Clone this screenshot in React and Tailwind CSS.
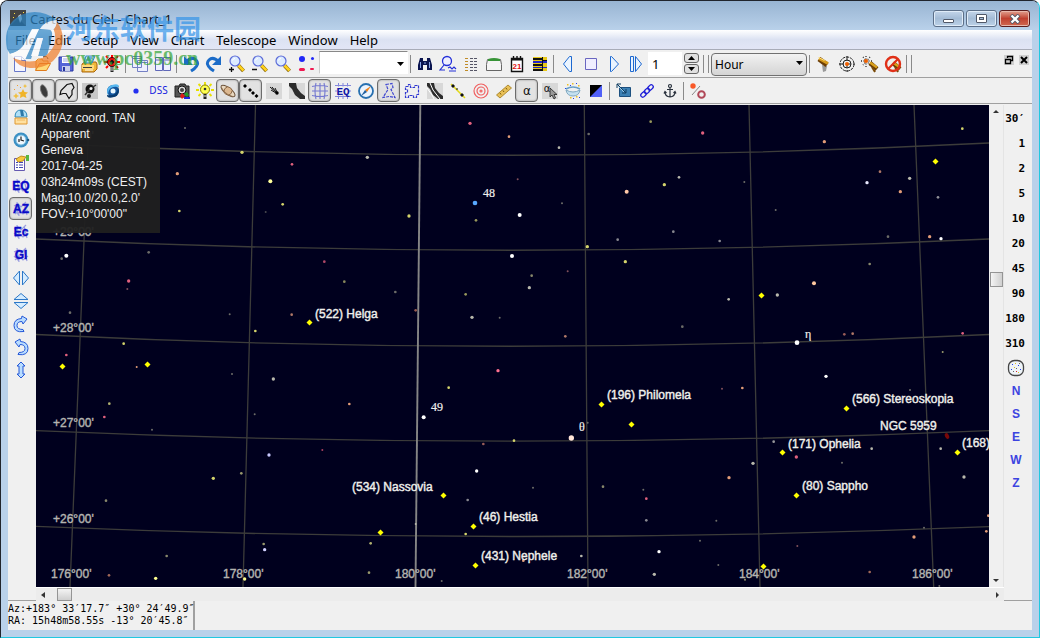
import React from "react";

const UI = "font-['Noto_Sans','Open_Sans',sans-serif]";

const lens = (
  <>
    <path d="M10.500 10.500l5 5.500" stroke="#8a6a10" strokeWidth="4" />
    <path d="M10.500 10.500l5 5" stroke="#ffd21c" strokeWidth="2.500" />
    <circle cx="7" cy="6" r="5" fill="#dcebff" stroke="#5c6cd8" strokeWidth="1.200" />
    <path d="M4.500 5.500q.5-2 2.500-2" stroke="#fff" fill="none" />
  </>
);

const milky = (
  <>
    <rect width="16" height="16" x="1" y="1" fill="#d8d8d8" />
    <path d="M1 1h7l1 5 4 5 4 3v3h-5l-5-4-3-6-3-3z" fill="#2c2c2c" />
  </>
);

const scribble = (
  <path d="M2 6l4-2 3 3 5-5M3 14l4-4 4 4 5-4M5 2l2 14M12 3l3 12M2 10l5 5" stroke="#9a9ee0" fill="none" strokeWidth="1.200" />
);

const letters = (text) => (
  <>
    {scribble}
    <text x="9" y="13" textAnchor="middle" fontFamily="Liberation Sans" fontWeight="700" fontSize="12" fill="#0808c8" stroke="#0808c8" strokeWidth=".4">
      {text}
    </text>
  </>
);

const scope = (
  <>
    <path d="M7 10l5 1-1 5-3 1z" fill="#9a9a9a" />
    <path d="M4 4l8 6" stroke="#6b3c04" strokeWidth="5" />
    <path d="M4 3.500l9 5" stroke="#d69a1c" strokeWidth="3" />
    <path d="M3.500 2.500l6 3" stroke="#ffe07a" strokeWidth="1" />
  </>
);

const smallScope = (
  <>
    <path d="M9 8l7 6" stroke="#6b3c04" strokeWidth="4.500" />
    <path d="M9 7.500l7 5" stroke="#d8a01c" strokeWidth="2.500" />
    <path d="M11 12l3 5" stroke="#7a4a08" strokeWidth="2" />
  </>
);

const ICONS = {
  new: <path d="M3.500 1.500h7l4 4v11h-11zM10.500 1.500v4h4" fill="#f5f6ff" stroke="#6878c8" />,
  open: (
    <>
      <path d="M2 15V6l2-2h4l1 2h5v3" fill="#fff2b8" stroke="#e0902c" />
      <path d="M1.500 15.500l4-7h11l-4 7z" fill="#ffd978" stroke="#e07c1c" />
      <path d="M9 2q4-2 5 2" stroke="#3c3c3c" fill="none" />
    </>
  ),
  save: (
    <>
      <path d="M2 2h14v14H3l-1-1z" fill="#5464d8" stroke="#2634a0" />
      <path d="M5 2h8v6H5z" fill="#fff" />
      <path d="M6 4h6M6 6h6" stroke="#9aa4e0" />
      <path d="M5 11h8v5H5z" fill="#c8ceec" />
      <path d="M6 12h2v4H6z" fill="#2634a0" />
    </>
  ),
  print: (
    <>
      <path d="M2 9l3-2h11l1 2v5l-3 3H2z" fill="#f0b83c" stroke="#a8640c" />
      <path d="M6 1h9l-3 7H4z" fill="#b8e4fc" stroke="#3484c0" />
      <path d="M7 3h5M6 5h5" stroke="#2878b8" />
      <path d="M2 10h12v4H2z" fill="#ffd978" />
      <path d="M3 12.500h9" stroke="#3c3c3c" />
      <path d="M5 15h8" stroke="#fff" />
    </>
  ),
  lampRed: (
    <>
      <path d="M9 0v3M1 7h3M17 7h-3M3 1l2 2M15 1l-2 2M3 13l2-2M15 13l-2-2" stroke="#f00" strokeWidth="2" />
      <circle cx="9" cy="7" r="4.500" fill="#f01010" stroke="#400" />
      <path d="M9 4.500l2.500 2.500L9 9.500 6.500 7z" fill="#111" />
      <path d="M7.500 11h3v6h-3z" fill="#222" />
      <path d="M7.500 13h3M7.500 15h3" stroke="#e8e8e8" />
    </>
  ),
  cascade: <path d="M1.500 1.500h9v11h-9zM6.500 5.500h10v11h-10zM1.500 3.500h9M6.500 7.500h10" fill="#eef0ff" stroke="#7480c4" />,
  tile: <path d="M1.500 2.500h7v13h-7zM9.500 2.500h7v13h-7zM1.500 5h7M9.500 5h7" fill="#eef0ff" stroke="#6068b8" />,
  undo: (
    <>
      <path d="M4 7q6-6 10-2t-2 9l-3 2" fill="none" stroke="#1c6cc8" strokeWidth="3" />
      <path d="M2 1v9h9z" fill="#1c6cc8" />
    </>
  ),
  redo: (
    <>
      <path d="M14 7q-6-6-10-2t2 9l3 2" fill="none" stroke="#1c6cc8" strokeWidth="3" />
      <path d="M16 1v9H7z" fill="#1c6cc8" />
    </>
  ),
  zoomIn: (
    <>
      {lens}
      <path d="M1 14.500h5M3.500 12v5" stroke="#111" strokeWidth="1.300" />
    </>
  ),
  zoomOut: (
    <>
      {lens}
      <path d="M1 14.500h5" stroke="#111" strokeWidth="1.300" />
    </>
  ),
  zoom: lens,
  binoc: (
    <>
      <path d="M4 3h3v3h4V3h3l2 7v5h-5v-5H7v5H2v-5z" fill="#0a1450" />
      <path d="M4.500 7v6M13.500 7v6M9 7v2" stroke="#88a4e8" />
    </>
  ),
  search: (
    <>
      <circle cx="8" cy="6" r="4.500" fill="#eef" stroke="#2430d8" strokeWidth="1.300" />
      <path d="M5 10l-4 5h5M9 13l2-1 2 2 2-2 2 2M10 16h7" stroke="#2430d8" fill="none" strokeWidth="1.200" />
    </>
  ),
  list: (
    <>
      <path d="M3 3.500h3M3 6.500h3M3 9.500h3M3 12.500h3M3 15.500h3" stroke="#c08c28" strokeWidth="1.200" />
      <path d="M8 3.500h7M8 6.500h7M8 9.500h7M8 12.500h7M8 15.500h7" stroke="#556" strokeWidth="1.200" strokeDasharray="3 1" />
    </>
  ),
  horizon: (
    <>
      <path d="M2.500 4.500h13l1 5v6h-15v-6z" fill="#f4f4f4" stroke="#666" />
      <path d="M3 4q6-2 12 0v2H3z" fill="#389438" />
    </>
  ),
  calendar: (
    <>
      <path d="M3.500 3.500h11v13h-11z" fill="#fff" stroke="#111" strokeWidth="1.400" />
      <path d="M3 4h12v1.500H3z" fill="#111" />
      <path d="M5.500 1v3M9 1v3M12.500 1v3" stroke="#111" strokeWidth="1.400" />
      <text x="9" y="14" textAnchor="middle" fontSize="8" fontWeight="700" fontFamily="Liberation Sans" fill="#e01010">21</text>
    </>
  ),
  table: (
    <>
      <path d="M2 2h14v14H2z" fill="#e8c818" />
      <path d="M2 3h9v2H2zM2 9h9v2H2zM2 14h9v2H2zM12 5h4v3h-4z" fill="#111" />
      <path d="M2 6h14v2H2zM2 12h14v1H2z" fill="#2424c8" />
      <path d="M11.500 2v14" stroke="#111" />
    </>
  ),
  prev: <path d="M12.500 1.500v15h-2l-6-7.500 6-7.500z" fill="#eaf4ff" stroke="#1c68d0" />,
  stop: <path d="M3.500 3.500h11v11h-11z" fill="#f0eeff" stroke="#6a66c0" />,
  next: <path d="M5.500 1.500v15h1l7-7.500-7-7.500z" fill="#eaf4ff" stroke="#1c68d0" />,
  fast: <path d="M2.500 1.500v15h3v-15zM7.500 1.500v15l6-7.500z" fill="#eaf4ff" stroke="#1c68d0" />,
  scope,
  target: (
    <>
      <circle cx="9" cy="9" r="7" fill="none" stroke="#222" strokeDasharray="3 1" />
      <circle cx="9" cy="9" r="4" fill="none" stroke="#222" />
      <path d="M9 1v16M1 9h16" stroke="#222" strokeDasharray="5 2" />
      <circle cx="9" cy="9" r="2" fill="#f06000" />
    </>
  ),
  targetScope: (
    <>
      <path d="M5 1v11M0 6h11M2 2l7 8M9 2L2 10" stroke="#333" strokeDasharray="1 1.500" strokeWidth="1.300" />
      <circle cx="5" cy="6" r="2" fill="#f06000" />
      {smallScope}
    </>
  ),
  noScope: (
    <>
      {smallScope}
      <circle cx="9" cy="9" r="7" fill="none" stroke="#e03018" strokeWidth="2.400" />
      <path d="M4 14L14 4" stroke="#e03018" strokeWidth="2.200" />
    </>
  ),
  stars: (
    <>
      <path d="M11 7l1.500 3 3.500.5-2.500 2 1 3.500-3.500-1.500L8 16l.5-3.500-2.500-2 3.500-.5z" fill="#f0b428" />
      <path d="M4 11l1 2 2 1-2 1-1 2-1-2-2-1 2-1zM13 2l.8 1.500 1.500.5-1.500.8L13 6l-.8-1.200L11 4l1.200-.5z" fill="#f0c040" />
      <path d="M5 3h1v1H5zM2 7h1v1H2zM8 5h1v1H8z" fill="#f0a030" />
    </>
  ),
  galaxy: <ellipse cx="9" cy="9" rx="3" ry="6.500" fill="#3c3c3c" stroke="#777" strokeWidth=".8" transform="rotate(-20 9 9)" />,
  outline: <path d="M9 2.500l5-1 2 4-2 3v4l-3 4-3-5H5l-3 1 1-4z" fill="none" stroke="#111" strokeWidth="1.200" />,
  photo: (
    <>
      <path d="M1 1h16v16H1z" fill="#c8c8c8" />
      <circle cx="9" cy="7" r="4.500" fill="#111" />
      <path d="M9 7l6-4M9 7l-5 6" stroke="#333" strokeWidth="1.500" />
      <circle cx="10" cy="6.500" r="1.500" fill="#eee" />
      <circle cx="8" cy="14" r="2" fill="#222" />
    </>
  ),
  spiral: (
    <>
      <circle cx="9" cy="9" r="6" fill="#1458a0" />
      <path d="M4 14Q1 5 8 3t7 2q-5-1-8 1t-3 8z" fill="#58b8f0" />
      <path d="M14 4q3 9-4 11t-7-2q5 1 8-1t3-8z" fill="#083c70" />
      <circle cx="9" cy="9" r="2.500" fill="#e8f8ff" />
    </>
  ),
  dot: <circle cx="9" cy="9" r="2.600" fill="#2430f0" />,
  camera: (
    <>
      <path d="M2 4h4l1-2h5l1 2h3v11H2z" fill="#555" stroke="#222" />
      <circle cx="9" cy="8" r="4" fill="#ddd" stroke="#111" />
      <circle cx="9" cy="8" r="2" fill="#444" />
      <path d="M7 14l2-3 3 3-3 3z" fill="#e01818" />
      <path d="M11 12l3-2 2 3-2 2z" fill="#20a028" />
      <path d="M11 15h6v2h-6z" fill="#2028e0" />
    </>
  ),
  bulb: (
    <>
      <path d="M9 0v3M0 8h3M18 8h-3M2.500 2l2 2M15.500 2l-2 2M2.500 14l2-2M15.500 14l-2-2" stroke="#e8e000" strokeWidth="1.800" />
      <circle cx="9" cy="7.500" r="4.500" fill="#ffff50" stroke="#888000" />
      <circle cx="9" cy="7" r="1.300" fill="#333" />
      <path d="M7.500 12h3v5h-3z" fill="#222" />
      <path d="M7.500 14h3" stroke="#eee" />
    </>
  ),
  planet: (
    <g transform="rotate(38 9 9)">
      <ellipse cx="9" cy="9" rx="8.500" ry="3.300" fill="#e8d8c0" stroke="#6a5038" />
      <circle cx="9" cy="9" r="4" fill="#dcb890" stroke="#846040" strokeWidth=".8" />
      <path d="M2 10.500q7 3 14 0" stroke="#8c6c4c" fill="none" />
    </g>
  ),
  asteroids: <path d="M3 2l2 2-2 2-2-2zM8 6l2 2-2 2-2-2zM11 9l2 2-2 2-2-2zM14.500 12l2 2-2 2-2-2z" fill="#000" />,
  comet: (
    <>
      <path d="M1 1h16v16H1z" fill="#d8d8d8" />
      <path d="M5 5l7 6M7 5l5 6M6 8l5 3M10 6l2 4" stroke="#111" />
      <circle cx="12" cy="11" r="1.700" fill="#000" />
    </>
  ),
  milky,
  milkyLine: (
    <>
      {milky}
      <path d="M4 1l3 7 7 9M1 6l5 7 2 4" stroke="#fff" fill="none" />
    </>
  ),
  grid: <path d="M1 4.500q8-2 16 0M1 9h16M1 13.500q8 2 16 0M5 1q-2 8 0 16M9 1v16M13 1q2 8 0 16" fill="none" stroke="#7478d0" strokeWidth="1.100" />,
  gridEq: (
    <>
      <path d="M1 3.500h16M1 14.500h16M4.500 1v16M9 1v16M13.500 1v16M1 9h16" stroke="#8488dc" fill="none" />
      <path d="M3 4.500h12v9H3z" fill="#efefef" />
      <text x="9" y="13" textAnchor="middle" fontFamily="Liberation Mono" fontWeight="700" fontSize="11" fill="#1018a8">EQ</text>
    </>
  ),
  compass: (
    <>
      <circle cx="9" cy="9" r="7" fill="#eaf4ff" stroke="#2870b0" strokeWidth="1.800" />
      <path d="M14 4l-4 6-2-2z" fill="#f08018" />
      <path d="M4 14l4-6 2 2z" fill="#2060a0" />
    </>
  ),
  figure: <path d="M6 2.500l6-1 1 4-2 2 4 8-6-1-6 1 5-8-2-5z" fill="none" stroke="#4048d0" strokeWidth="1.200" strokeDasharray="3 1" />,
  bounds: <path d="M2.500 4.500h3v-2h2v3h4v-2h4v9h-2v3h-3v-2h-5v2h-3v-5h2v-3h-2z" fill="none" stroke="#3038d0" strokeWidth="1.200" strokeDasharray="3 1" />,
  ecliptic: (
    <>
      <path d="M2 2l14 14" stroke="#e0d818" strokeWidth="1.500" />
      <path d="M4 2l2 2-2 2-2-2zM13 11l2 2-2 2-2-2zM8 6l1 1-1 1-1-1z" fill="#111" />
    </>
  ),
  rings: (
    <g fill="none" stroke="#f06060" strokeWidth="1.200">
      <circle cx="9" cy="9" r="7" />
      <circle cx="9" cy="9" r="4" />
      <circle cx="9" cy="9" r="1" />
    </g>
  ),
  ruler: (
    <>
      <path d="M1.500 13L13 3l3.500 3L5 16z" fill="#e8c058" stroke="#a07818" strokeWidth=".8" />
      <path d="M5 11l1 1.500M8 8.500l1 1.500M11 6l1 1.500" stroke="#7a5808" />
    </>
  ),
  alpha: <text x="9" y="13" textAnchor="middle" fontFamily="DejaVu Sans" fontSize="12" fill="#111">α</text>,
  alphaCursor: (
    <>
      <path d="M1 1h16v16H1z" fill="#d8d8d8" />
      <text x="6" y="10" textAnchor="middle" fontFamily="DejaVu Sans" fontSize="10" fill="#111">α</text>
      <path d="M9 6v9l2-2 2 4 1.500-1-1.500-3.500h3z" fill="#999" stroke="#222" strokeWidth=".8" />
    </>
  ),
  dome: (
    <>
      <path d="M2 8q1 6 7 6t7-6q-7 4-14 0z" fill="#c4e0f0" stroke="#80a8c0" />
      <path d="M2 7q7-4 14 0" stroke="#68a0c8" fill="none" strokeWidth="1.500" />
      <path d="M3 2h1.500v1.500H3zM8 1h1.500v1.500H8zM14 3h1.500v1.500H14zM6 15h1.500v1.500H6zM12 14h1.500v1.500H12z" fill="#f0c020" />
      <path d="M6 3h1v1H6zM12 1h1v1h-1zM1 6h1v1H1zM15 15h1v1h-1zM9 16h1v1H9z" fill="#2040f0" />
    </>
  ),
  night: (
    <>
      <path d="M3 3h12v12H3z" fill="#5060f8" />
      <path d="M3 3h12L3 15z" fill="#000" />
    </>
  ),
  scale: (
    <>
      <path d="M4.500 5.500h11v9h-11z" fill="#3c80b4" stroke="#1c5080" />
      <path d="M2 2l9 9M2 2h4M2 2v4M11 11V7M11 11H7" stroke="#103c60" />
      <path d="M3 4l6 6" stroke="#a8d4f0" strokeWidth=".9" />
    </>
  ),
  link: (
    <g fill="none" stroke="#2020d8" strokeWidth="1.300" transform="rotate(-45 9 9)">
      <rect x="1" y="7" width="6" height="4" rx="2" />
      <rect x="6" y="7" width="6" height="4" rx="2" />
      <rect x="11" y="7" width="6" height="4" rx="2" />
    </g>
  ),
  anchor: (
    <g fill="none" stroke="#28303c" strokeWidth="1.200">
      <circle cx="9" cy="4" r="1.500" />
      <path d="M9 5.500V15M6 7.500h6M4 10q0 4.500 5 5 5-.5 5-5M3 11.500l1-2 1.500 1.500M15 11.500l-1-2-1.500 1.500" />
    </g>
  ),
  swap: (
    <>
      <circle cx="4" cy="4" r="2.700" fill="#f85828" />
      <path d="M11 4L3 13" stroke="#888" />
      <circle cx="12.500" cy="12.500" r="3.300" fill="none" stroke="#b04858" strokeWidth="2" />
    </>
  ),
  observatory: (
    <>
      <path d="M3 9q0-7 6-7t6 7z" fill="#b0e0f8" stroke="#2c88b8" />
      <path d="M8 2h3l1 6H9z" fill="#2c78a8" />
      <path d="M3 10h12v6H3z" fill="#ffe0a0" stroke="#e09830" />
      <path d="M5 12h8" stroke="#f0b860" />
    </>
  ),
  clock: (
    <>
      <circle cx="9" cy="9" r="7.500" fill="#3c90c4" />
      <circle cx="9" cy="9" r="5" fill="#f0f8ff" stroke="#78bce0" />
      <path d="M9 5.500V9l3 1M7 8v3" stroke="#222" strokeWidth="1.200" fill="none" />
      <circle cx="16" cy="9" r="1.300" fill="#1c5c88" />
    </>
  ),
  sheet: (
    <>
      <path d="M2.500 4.500h10v12h-10z" fill="#fff" stroke="#6458b0" />
      <path d="M4 8.500h2M7 8.500h4M4 11h2M7 11h4M4 13.500h2M7 13.500h4" stroke="#4448b0" />
      <path d="M4 5l5-3 5 1-3 4-5 1z" fill="#f8c83c" stroke="#b07c10" strokeWidth=".8" />
      <path d="M14 1h3v6h-3z" fill="#58b840" />
    </>
  ),
  eq: letters("EQ"),
  az: letters("AZ"),
  ec: letters("Ec"),
  gl: letters("Gl"),
  flipH: <path d="M7.500 2v14L1.500 9zM10.500 2v14l6-7z" fill="#d4ecff" stroke="#2c78c8" />,
  flipV: <path d="M2 7.500h14L9 1.500zM2 10.500h14L9 16.500z" fill="#d4ecff" stroke="#2c78c8" />,
  rotR: <path d="M10 1l5 3-4 5-1-2.500q-5 0-5 4t6 4l1 2Q2 18 2 10.500 2 4 9.500 3.500z" fill="#b8dcff" stroke="#2458d8" />,
  rotL: <path d="M8 1L3 4l4 5 1-2.500q5 0 5 4t-6 4l-1 2q10 1.500 10-6Q16 4 8.500 3.500z" fill="#b8dcff" stroke="#2458d8" />,
  updown: <path d="M9 1l4 4h-2v8h2l-4 4-4-4h2V5H5z" fill="#b8dcff" stroke="#2458d8" />,
  sky: (
    <>
      <rect x="1.500" y="1.500" width="15" height="15" rx="6" fill="#eef4f8" stroke="#444" strokeWidth="1.300" />
      <path d="M5 5h1v1H5zM11 6h1v1h-1zM13 10h1v1h-1zM4 10h1v1H4z" fill="#2040f0" />
      <path d="M8 4h1v1H8zM7 8h1v1H7zM11 13h1v1h-1z" fill="#e0c020" />
      <path d="M9 12h1v1H9z" fill="#e02020" />
      <path d="M12 4h1v1h-1zM6 12h1v1H6zM9 9h1v1H9z" fill="#666" />
    </>
  ),
};

function Icon({ name }) {
  return (
    <svg width="18" height="18" viewBox="0 0 18 18" fill="none" aria-hidden="true">
      {ICONS[name]}
    </svg>
  );
}

function Tool({ name, label, pressed, children }) {
  return (
    <button
      type="button"
      aria-label={label}
      aria-pressed={pressed}
      className={
        pressed
          ? "flex h-[23px] w-[23px] shrink-0 items-center justify-center rounded-sm border border-[#6c6c6c] bg-[#e2e2e2] shadow-[inset_0_0_2px_#888]"
          : "flex h-[23px] w-[23px] shrink-0 items-center justify-center"
      }
    >
      {children || <Icon name={name} />}
    </button>
  );
}

const Sep = () => <span className="mx-0.5 h-[18px] w-px shrink-0 bg-[#8a8a8a]" />;

const Tools = ({ items }) => items.map(([name, label, pressed]) => <Tool key={label} name={name} label={label} pressed={pressed} />);

const FILE_TOOLS = [["new", "New chart"], ["open", "Open"], ["save", "Save"], ["print", "Print"], ["lampRed", "Night vision"]];
const WINDOW_TOOLS = [["cascade", "Cascade"], ["tile", "Tile"]];
const ZOOM_TOOLS = [["undo", "Undo"], ["redo", "Redo"], ["zoomIn", "Zoom in"], ["zoomOut", "Zoom out"], ["zoom", "Default zoom"]];
const SEARCH_TOOLS = [["binoc", "Advanced search"], ["search", "Position"], ["list", "Object list"], ["horizon", "Horizon view"], ["calendar", "Calendar"], ["table", "Ephemeris"]];
const TIME_TOOLS = [["prev", "Step back"], ["stop", "Now"], ["next", "Step forward"], ["fast", "Animate"]];
const SCOPE_TOOLS = [["scope", "Connect telescope"], ["target", "Slew"], ["targetScope", "Sync"], ["noScope", "Abort slew"]];

const OBJECT_TOOLS_A = [["stars", "Show stars", true], ["galaxy", "Show nebulae", true], ["outline", "Show outlines", true], ["photo", "Show pictures"], ["spiral", "Object list pictures"], ["dot", "Show marks"]];
const OBJECT_TOOLS_B = [
  ["camera", "Background images"], ["bulb", "Blink image"], ["planet", "Show planets", true], ["asteroids", "Show asteroids", true],
  ["comet", "Show comets"], ["milky", "Show Milky Way"], ["grid", "Show grid", true], ["gridEq", "Equatorial grid"], ["compass", "Show compass"],
  ["figure", "Constellation lines", true], ["bounds", "Constellation limits"], ["milkyLine", "Galactic equator"], ["ecliptic", "Ecliptic"],
  ["rings", "Show mark circles"], ["ruler", "Measure"], ["alpha", "Show labels", true], ["alphaCursor", "Edit label"], ["dome", "Below horizon"], ["night", "Sky background"],
];
const OBJECT_TOOLS_C = [["scale", "Sync chart"], ["link", "Link charts"], ["anchor", "Track object"]];

const SIDE_TOOLS = [
  ["observatory", "Observatory"], ["clock", "Date and time"], ["sheet", "Chart settings"], ["eq", "Equatorial coordinates"], ["az", "Azimuthal coordinates", true],
  ["ec", "Ecliptic coordinates"], ["gl", "Galactic coordinates"], ["flipH", "Mirror horizontally"], ["flipV", "Mirror vertically"], ["rotR", "Rotate right"], ["rotL", "Rotate left"], ["updown", "Rotate by 180 degrees"],
];

/* Star fields in thirds of a chart unit: [x, y, radius, colour]. */
const P = "#e0607e", O = "#e29c78", Y = "#d4d46c", W = "#ffffff", G = "#6c6c68", L = "#b8b8ac", R = "#80505c";
const FIELDS = [
  { dx: 0, dy: 0, stars: [
    [1301, 54, 5, P], [1418, 94, 4, O], [446, 68, 3, G], [617, 141, 5, Y], [993, 156, 5, L], [767, 177, 4, P], [423, 205, 5, O], [702, 228, 6, "#ffff9c"],
    [739, 297, 4, Y], [688, 320, 3, "#484850"], [429, 317, 4, Y], [1118, 332, 5, Y], [1316, 293, 7, "#58a8ff"], [1319, 345, 4, "#98985c"],
    [90, 451, 6, W], [76, 460, 4, G], [337, 441, 4, G], [864, 469, 4, "#b04868"], [277, 527, 5, P], [273, 551, 3, R], [924, 529, 4, "#88885c"],
    [1077, 560, 4, G], [1288, 567, 4, "#98985c"], [101, 622, 4, G], [580, 627, 3, G], [766, 628, 4, "#b07868"], [1138, 615, 4, "#985c50"],
    [1307, 636, 5, L], [1390, 637, 3, G], [657, 677, 4, Y], [262, 715, 4, Y], [1427, 452, 6, W], [334, 131, 3, "#683040"],
  ] },
  { dx: 474, dy: 0, stars: [
    [421, 49, 4, "#98985c"], [235, 86, 4, G], [577, 83, 5, P], [146, 127, 4, L], [942, 109, 5, O], [1356, 70, 4, Y], [22, 222, 3, R], [155, 294, 3, G],
    [28, 329, 6, W], [349, 259, 6, "#ffc8a8"], [462, 238, 5, Y], [506, 216, 4, L], [702, 230, 3, G], [1109, 199, 4, "#b07868"], [1070, 232, 5, "#e8e8ff"],
    [1198, 219, 5, L], [1170, 259, 5, O], [1283, 276, 4, "#909098"], [796, 314, 3, G], [322, 403, 4, "#888890"], [489, 379, 4, "#888890"], [628, 407, 4, "#888890"],
    [231, 424, 5, Y], [345, 469, 5, Y], [1133, 394, 4, G], [1258, 394, 5, O], [1292, 400, 5, W], [64, 511, 4, "#88886c"], [57, 547, 5, L],
    [172, 498, 3, R], [655, 582, 4, L], [1078, 476, 4, "#88886c"], [911, 534, 6, "#ffc8a0"], [801, 569, 5, L], [516, 664, 4, G], [165, 693, 4, "#b07868"],
    [1002, 687, 4, "#985c58"], [1027, 685, 4, "#b07868"], [1357, 684, 4, P], [860, 712, 7, W],
  ] },
  { dx: 0, dy: 240, stars: [
    [90, 29, 4, P], [301, 65, 3, O], [587, 86, 3, G], [711, 101, 5, L], [219, 175, 4, "#b0b070"], [204, 215, 4, P], [347, 253, 3, G], [655, 207, 3, G],
    [939, 176, 4, O], [1385, 76, 5, "#ff7090"], [1237, 127, 4, Y], [1162, 216, 6, W], [858, 314, 3, "#a84060"], [698, 329, 5, "#c8c8ff"], [615, 384, 4, "#98986c"],
    [531, 399, 5, Y], [209, 466, 4, "#88886c"], [1341, 296, 4, "#985c58"], [1321, 377, 5, W], [1294, 464, 4, "#888890"], [1138, 536, 3, L], [1288, 566, 4, Y],
    [1003, 594, 4, "#b0b070"], [682, 596, 4, "#98986c"], [685, 613, 5, "#d0d0ff"], [391, 632, 4, "#88886c"], [218, 690, 4, "#a06858"], [358, 699, 5, "#ffff90"],
    [625, 701, 5, "#ffff90"], [998, 682, 4, "#98986c"], [1216, 707, 3, G], [1433, 286, 4, Y],
  ] },
  { dx: 474, dy: 240, stars: [
    [947, 93, 5, W], [635, 130, 3, R], [696, 128, 4, O], [1297, 20, 3, "#98986c"], [1199, 134, 3, G], [183, 278, 8, "#ffe4d8"], [232, 232, 3, G],
    [728, 354, 5, L], [790, 289, 4, "#98989c"], [858, 335, 5, P], [1084, 310, 4, L], [995, 352, 3, G], [656, 397, 5, O], [1291, 310, 4, L],
    [1361, 395, 5, L], [68, 427, 3, G], [278, 424, 4, "#88886c"], [399, 433, 3, G], [408, 460, 4, P], [408, 525, 4, "#888890"], [618, 526, 3, G],
    [569, 586, 3, G], [446, 619, 5, W], [213, 632, 4, L], [432, 687, 5, L], [39, 646, 4, O], [624, 659, 3, G], [704, 703, 3, "#98986c"],
    [861, 602, 3, R], [1078, 680, 4, "#a06858"], [1211, 575, 5, O], [1241, 547, 3, G], [1428, 558, 4, O], [1434, 511, 4, O], [1287, 722, 3, G],
  ] },
];

const ASTEROIDS = [[273, 217], [899, 56], [725, 190], [26, 261], [111, 259], [565, 299], [595, 319], [810, 303], [746, 347], [921, 347], [760, 390], [407, 390], [344, 427], [437, 421], [439, 460], [727, 461]];

const OBJECT_LABELS = [
  [279, 213, "(522) Helga"], [571, 294, "(196) Philomela"], [816, 298, "(566) Stereoskopia"], [844, 325, "NGC 5959"], [752, 343, "(171) Ophelia"],
  [926, 342, "(168)"], [766, 385, "(80) Sappho"], [316, 386, "(534) Nassovia"], [443, 416, "(46) Hestia"], [445, 455, "(431) Nephele"],
];
const STAR_LABELS = [[447, 92, "48"], [395, 306, "49"], [769, 233, "η"], [543, 326, "θ"]];
const GRID_LABELS = [
  [17, 35, "+30°00'"], [17, 131, "+29°00'"], [17, 227, "+28°00'"], [17, 322, "+27°00'"], [17, 418, "+26°00'"],
  [15, 473, "176°00'"], [187, 473, "178°00'"], [359, 473, "180°00'"], [531, 473, "182°00'"], [703, 473, "184°00'"], [876, 473, "186°00'"],
];

function StarChart() {
  return (
    <svg className="absolute inset-0 h-full w-full" viewBox="0 0 953 482" preserveAspectRatio="xMidYMid slice" role="img" aria-label="Star chart">
      <g fill="none" stroke="#3c3c3a" strokeWidth="1.300">
        <path d="M53.500 0L34 482M219.500 0L207 482M548.300 0L552 482M713 0L724 482M878 0L897.700 482" />
        <path d="M0 38Q474 62.500 953 38M0 134Q474 156.500 953 134M0 229.500Q474 253 953 229.500M0 325.700Q474 346.500 953 325.700M0 421.300Q474 441.500 953 421.700" />
      </g>
      <path d="M384.300 0L379.500 482" stroke="#858585" strokeWidth="1.900" />
      {FIELDS.map((f, i) => (
        <g key={i} transform={`translate(${f.dx} ${f.dy}) scale(0.33333)`}>
          {f.stars.map(([x, y, r, c], j) => (
            <circle key={j} cx={x + 1} cy={y + 1} r={r} fill={c} />
          ))}
        </g>
      ))}
      <ellipse cx="911" cy="331" rx="2" ry="3" fill="#780808" transform="rotate(-25 911 331)" />
      {ASTEROIDS.map(([x, y]) => (
        <path key={`${x}-${y}`} d={`M${x + 0.5} ${y - 2.5}l3 3-3 3-3-3z`} fill="#ffff00" />
      ))}
      <g fontFamily="Liberation Sans, Arial, sans-serif" fontSize="12" fill="#b4b4b0" stroke="#b4b4b0" strokeWidth="0.400">
        {GRID_LABELS.map(([x, y, t]) => (
          <text key={t} x={x} y={y}>{t}</text>
        ))}
      </g>
      <g fontFamily="Liberation Sans, Arial, sans-serif" fontSize="12" fill="#f0f0ec" stroke="#f0f0ec" strokeWidth="0.400">
        {OBJECT_LABELS.map(([x, y, t]) => (
          <text key={t} x={x} y={y}>{t}</text>
        ))}
      </g>
      <g fontFamily="Liberation Serif, Times New Roman, serif" fontSize="12" fill="#f0f0ec" stroke="#f0f0ec" strokeWidth="0.200">
        {STAR_LABELS.map(([x, y, t]) => (
          <text key={t} x={x} y={y}>{t}</text>
        ))}
      </g>
    </svg>
  );
}

function Arrow({ d, label }) {
  return (
    <button type="button" aria-label={label} className="flex h-[14px] w-[14px] items-center justify-center">
      <svg width="8" height="8" viewBox="0 0 8 8" aria-hidden="true"><path d={d} fill="#333" /></svg>
    </button>
  );
}

function TitleBar() {
  const shape = "flex h-[17px] w-[31px] items-center justify-center rounded-[3px] border border-[#5c6f88] bg-linear-to-b from-[#c4d6ea] via-[#a4bcd6] to-[#bcd2e8] shadow-[inset_0_0_0_1px_#e0ecf8]";
  return (
    <header className="flex h-[29px] items-start bg-linear-to-b from-[#98b4d2] to-[#b9d1ea] pr-[9px] pl-[9px]">
      <svg className="mt-[9px]" width="16" height="16" viewBox="0 0 16 16" aria-hidden="true">
        <rect width="16" height="16" fill="#444" />
        <path d="M0 16L7 9l5 3 4 4z" fill="#222" />
        <path d="M8 6l3-2 1 5-2 4z" fill="#ccc" />
        <path d="M4 3h1v1H4zM13 2h1v1h-1zM3 7h1v1H3z" fill="#ffe040" />
      </svg>
      <h1 className="mt-2 ml-1 flex-1 text-[13px] leading-5 text-[#111]">Cartes du Ciel - Chart_1</h1>
      <div className="mt-[9px] flex gap-0.5">
        <button type="button" aria-label="Minimize" className={shape}>
          <span className="mt-1 h-1 w-[11px] rounded-[1px] border border-[#505868] bg-white" />
        </button>
        <button type="button" aria-label="Maximize" className={shape}>
          <span className="flex h-[9px] w-[11px] items-center justify-center rounded-[1px] border border-[#505868] bg-white">
            <span className="h-[3px] w-[5px] border border-[#505868] bg-[#a4bcd6]" />
          </span>
        </button>
        <button type="button" aria-label="Close" className="flex h-[17px] w-[31px] items-center justify-center rounded-[3px] border border-[#5c1c1c] bg-linear-to-b from-[#e0a090] via-[#c04030] to-[#d06850] shadow-[inset_0_0_0_1px_#e8b8ac]">
          <svg width="12" height="10" viewBox="0 0 12 10" aria-hidden="true">
            <path d="M2 1l8 8M10 1L2 9" stroke="#505868" strokeWidth="4" />
            <path d="M2.500 1.500l7 7M9.500 1.500l-7 7" stroke="#fff" strokeWidth="2.300" />
          </svg>
        </button>
      </div>
    </header>
  );
}

function Watermark() {
  return (
    <div className="pointer-events-none absolute top-2.5 left-1 flex gap-[3px] opacity-70">
      <svg width="58" height="58" viewBox="0 0 58 58" aria-hidden="true">
        <path d="M2 38Q-3 14 16 4q18-8 36 5-14 2-17 9h-7q-5 13-12 20-5 4-11 5z" fill="#2c84c4" />
        <path d="M34 18h8q6 0 5 7l-5 20h-9l5-18h-5l-7 21h-9z" fill="#2c84c4" />
        <path d="M5 43q8-2 13-8l9-17h7L20 49q-10 0-15-6z" fill="#fff" />
        <path d="M32 27h6l-5 18h-7z" fill="#fff" />
        <path d="M52 11q9 12 4 27-8 20-31 19-12-1-17-10 26 10 39-9 6-9 1-22z" fill="#f07c28" />
        <path d="M35 18q4-8 17-9 0 6-4 10z" fill="#fff" />
      </svg>
      <div className="flex flex-col">
        <span className="mt-0.5 text-[27px] leading-[30px] font-bold text-[#3494e8] font-['Noto_Sans_CJK_SC',sans-serif]">河东软件园</span>
        <span className="mt-1 text-[20px] leading-[22px] font-bold text-[#30a436] font-['Liberation_Serif',serif]">www.pc0359.cn</span>
      </div>
    </div>
  );
}

const FOVS = ["30′", "1", "2", "5", "10", "20", "45", "90", "180", "310"];
const MENUS = ["File", "Edit", "Setup", "View", "Chart", "Telescope", "Window", "Help"];

export default function App() {
  return (
    <div className={`relative flex min-h-screen flex-col overflow-hidden rounded-t-lg border border-[#20242c] border-r-[#20c8e0] border-b-[#20c8e0] bg-[#b9d1ea] text-black ${UI}`}>
      <TitleBar />
      <div className="mx-[7px] mb-[7px] flex flex-1 flex-col bg-[#f0f0f0]">
        <nav className="flex h-5 items-center gap-3 border-b border-[#a8acb8] bg-linear-to-b from-white via-[#dce2f2] to-[#e2e6f6] pl-[7px] text-[13px] leading-[18px]">
          {MENUS.map((m) => (
            <button key={m} type="button">{m}</button>
          ))}
        </nav>

        <div role="toolbar" aria-label="Main" className="flex h-[28px] items-center border-b border-[#a0a0a0]">
          <Tools items={FILE_TOOLS} />
          <Sep />
          <Tools items={WINDOW_TOOLS} />
          <Sep />
          <Tools items={ZOOM_TOOLS} />
          <div className="flex w-[25px] shrink-0 items-center justify-center gap-[5px]">
            <button type="button" aria-label="More stars" className="flex flex-col items-center gap-1.5">
              <span className="h-1.5 w-1.5 rounded-full bg-[#2028f8]" />
              <span className="h-[3px] w-1.5 rounded-full bg-[#f01850]" />
            </button>
            <button type="button" aria-label="Fewer stars" className="flex flex-col items-center gap-2">
              <span className="h-[3px] w-[3px] rounded-full bg-[#2028f8]" />
              <span className="h-0.5 w-1 rounded-full bg-[#f01850]" />
            </button>
          </div>
          <div className="relative w-[89px] shrink-0">
            <select aria-label="Search object" className="h-[23px] w-full appearance-none border border-t-[#888] border-r-white border-b-white border-l-[#ccc] bg-white">
              <option></option>
            </select>
            <svg className="pointer-events-none absolute top-[11px] right-1" width="7" height="4" viewBox="0 0 7 4" aria-hidden="true"><path d="M0 0h7L3.500 4z" fill="#000" /></svg>
          </div>
          <Sep />
          <Tools items={SEARCH_TOOLS} />
          <Sep />
          <Tools items={TIME_TOOLS} />
          <input aria-label="Time step" defaultValue="1" className="h-[23px] w-[34px] shrink-0 bg-white px-1 text-[13px] leading-5" />
          <div className="mx-0.5 flex w-[15px] shrink-0 flex-col gap-px">
            <button type="button" aria-label="Increase" className="flex h-2.5 items-center justify-center rounded-[3px] border border-[#666] bg-[#e0e0e0]">
              <svg width="7" height="4" viewBox="0 0 7 4" aria-hidden="true"><path d="M0 4h7L3.500 0z" fill="#000" /></svg>
            </button>
            <button type="button" aria-label="Decrease" className="flex h-2.5 items-center justify-center rounded-[3px] border border-[#666] bg-[#e0e0e0]">
              <svg width="7" height="4" viewBox="0 0 7 4" aria-hidden="true"><path d="M0 0h7L3.500 4z" fill="#000" /></svg>
            </button>
          </div>
          <Sep />
          <Sep />
          <div className="relative w-[96px] shrink-0">
            <select aria-label="Time unit" className="h-[23px] w-full appearance-none rounded-sm border border-[#707070] bg-linear-to-b from-[#f2f2f2] to-[#d4d4d4] px-[3px] text-[12px] leading-5">
              <option>Hour</option>
              <option>Day</option>
            </select>
            <svg className="pointer-events-none absolute top-[10px] right-1" width="7" height="4" viewBox="0 0 7 4" aria-hidden="true"><path d="M0 0h7L3.500 4z" fill="#000" /></svg>
          </div>
          <Sep />
          <Tools items={SCOPE_TOOLS} />
          <Sep />
          <Sep />
          <div className="mb-2 ml-auto flex shrink-0 gap-[5px] pr-[3px]">
            <button type="button" aria-label="Restore chart" className="bg-[#d0d0d0]">
              <svg width="10" height="10" viewBox="0 0 10 10" aria-hidden="true"><path d="M3.500 3V1.500h5v4H7M1.500 4.500h5v4h-5zM3 1.500h6M1 4.500h6" fill="none" stroke="#000" strokeWidth="1.300" /></svg>
            </button>
            <button type="button" aria-label="Close chart" className="bg-[#d0d0d0]">
              <svg width="10" height="10" viewBox="0 0 10 10" aria-hidden="true"><path d="M2 2l6 6M8 2L2 8" stroke="#000" strokeWidth="2" /></svg>
            </button>
          </div>
        </div>

        <div role="toolbar" aria-label="Objects" className="flex h-[26px] items-center border-b border-[#a0a0a0] pl-px">
          <Tools items={OBJECT_TOOLS_A} />
          <Tool label="DSS images">
            <span className="text-[10px] text-[#1420e0]">DSS</span>
          </Tool>
          <Tools items={OBJECT_TOOLS_B} />
          <Sep />
          <Tools items={OBJECT_TOOLS_C} />
          <Sep />
          <Tool name="swap" label="Replace" />
        </div>

        <div className="flex flex-1 pt-px">
          <div role="toolbar" aria-label="Coordinates" className="flex w-[28px] shrink-0 flex-col border-b border-[#a0a0a0] pl-px">
            <Tools items={SIDE_TOOLS} />
          </div>
          <div className="flex min-w-0 flex-1 flex-col">
            <div className="flex flex-1">
              <main className="relative flex-1 overflow-hidden bg-[#00001e]">
                <StarChart />
                <div className="absolute top-0 left-0 w-[124px] bg-[#202020]/95 pt-[5px] pb-[11px] pl-[5px] text-[12px] leading-4 whitespace-nowrap text-[#f0f0f0] font-['Liberation_Sans',Arial,sans-serif]">
                  <p>Alt/Az coord. TAN</p>
                  <p>Apparent</p>
                  <p>Geneva</p>
                  <p>2017-04-25</p>
                  <p>03h24m09s (CEST)</p>
                  <p>Mag:10.0/20.0,2.0'</p>
                  <p>FOV:+10°00'00"</p>
                </div>
              </main>
              <div className="flex w-[15px] shrink-0 flex-col items-center border-r border-[#e4e4e4] bg-[#f0f0f0]">
                <Arrow label="Scroll up" d="M1 5h6L4 2z" />
                <div className="flex flex-1 flex-col justify-center">
                  <div className="mb-[133px] h-[15px] w-[13px] border border-[#949494] bg-linear-to-r from-[#f4f4f4] to-[#cfcfcf]" />
                </div>
                <Arrow label="Scroll down" d="M1 3h6L4 6z" />
              </div>
            </div>
            <div className="flex h-[14px] items-center border-t border-white bg-[#ececec]">
              <Arrow label="Scroll left" d="M6 1v6L2 4z" />
              <div className="ml-[7px] h-[13px] w-[15px] border border-[#949494] bg-linear-to-b from-[#f4f4f4] to-[#cfcfcf]" />
              <div className="flex-1" />
              <Arrow label="Scroll right" d="M3 1v6l3-3z" />
            </div>
          </div>
          <div role="toolbar" aria-label="Field of view" className="flex w-[28px] shrink-0 flex-col border-b border-[#a0a0a0] pr-1">
            <div className="flex flex-col pt-px font-['DejaVu_Sans_Mono',monospace] text-[11px] font-bold">
              {FOVS.map((f) => (
                <button key={f} type="button" className="h-[25px] pr-[3px] text-right leading-[25px]">{f}</button>
              ))}
            </div>
            <div className="flex flex-col items-center font-['Liberation_Sans',Arial,sans-serif] text-[12px] font-bold text-[#3c44e0]">
              <Tool name="sky" label="Whole sky" />
              {["N", "S", "E", "W", "Z"].map((d) => (
                <Tool key={d} label={`Look ${d}`}>
                  <span className="leading-4">{d}</span>
                </Tool>
              ))}
            </div>
          </div>
        </div>

        <footer className="flex h-[29px] shrink-0">
          <div className="w-[187px] border-r-2 border-[#a0a0a0] pt-0.5 font-['DejaVu_Sans_Mono',monospace] text-[10px] leading-3 whitespace-pre">
            <p>Az:+183° 33′17.7″ +30° 24′49.9″</p>
            <p>RA: 15h48m58.55s -13° 20′45.8″</p>
          </div>
        </footer>
      </div>
      <Watermark />
    </div>
  );
}
